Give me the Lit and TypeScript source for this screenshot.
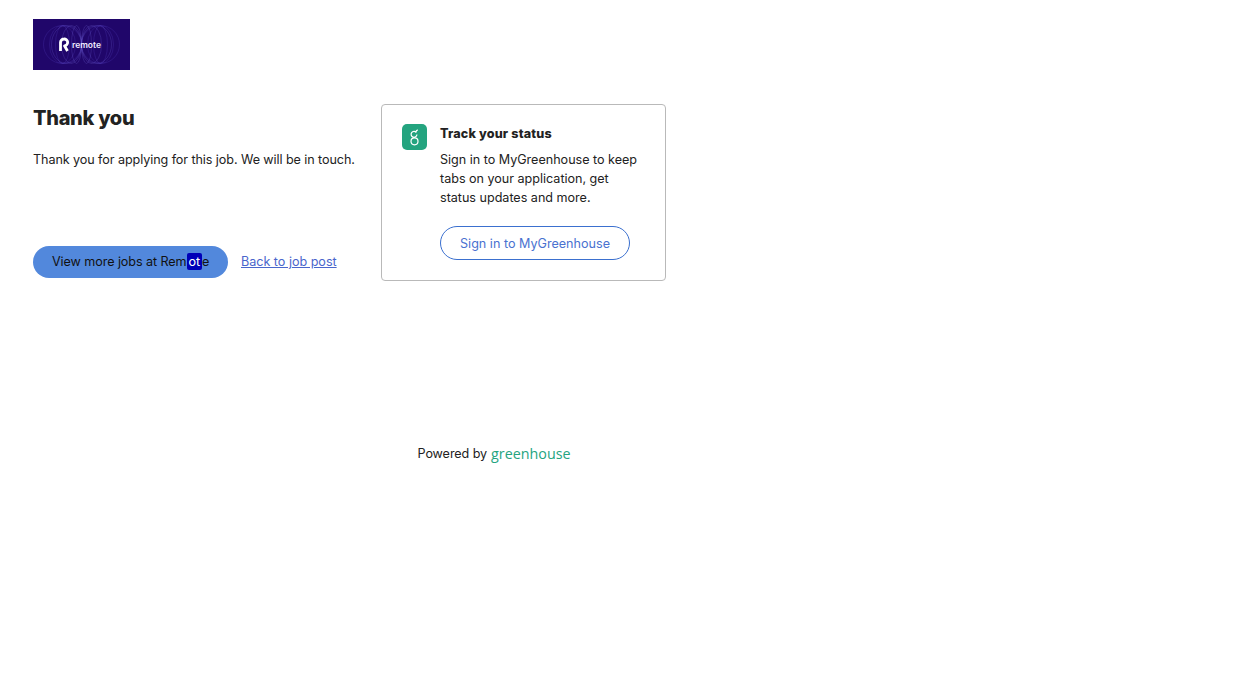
import { LitElement, html, css, svg } from "lit";
import { customElement } from "lit/decorators.js";

const meridians = [19, 13, 7];
const tangents = [15, 10, 5];

@customElement("app-root")
export class AppRoot extends LitElement {
  static styles = css`
    :host {
      display: block;
      min-height: 683px;
      background: #fff;
      font-family: "Inter", "Liberation Sans", sans-serif;
      color: #222;
      font-size: 12.6px;
      letter-spacing: -0.08px;
    }
    .page {
      width: 955px;
      box-sizing: border-box;
      padding: 19px 0 0 33px;
    }
    .logo {
      display: block;
      width: 97px;
      height: 51px;
    }
    .row {
      display: flex;
      margin-top: 34px;
      align-items: flex-start;
    }
    .left {
      width: 348px;
      flex: none;
    }
    h1 {
      margin: 2px 0 0;
      font-size: 20px;
      line-height: 24px;
      font-weight: 800;
      letter-spacing: -0.3px;
      color: #222;
    }
    .msg {
      margin: 19px 0 0;
      line-height: 22px;
      white-space: nowrap;
    }
    .actions {
      display: flex;
      align-items: center;
      gap: 13px;
      margin-top: 75px;
    }
    .btn {
      width: 195px;
      height: 32px;
      box-sizing: border-box;
      padding: 0 0 2px 19px;
      border-radius: 16px;
      background: #5288dc;
      display: flex;
      align-items: center;
      white-space: nowrap;
      color: #111;
    }
    .sel {
      display: inline-block;
      line-height: 17px;
      padding: 0 2px;
      background: #0000b8;
      color: #fff;
      border-radius: 2px;
    }
    .back {
      color: #4a66cc;
      text-decoration: underline;
      letter-spacing: -0.02px;
      padding-bottom: 2px;
    }
    .card {
      width: 285px;
      height: 177px;
      box-sizing: border-box;
      border: 1px solid #b9b9b9;
      border-radius: 4px;
      padding: 20px 20px 0;
      display: flex;
      gap: 13px;
    }
    .mark {
      display: block;
      width: 25px;
      height: 26px;
      margin-top: -1px;
      flex: none;
    }
    .track {
      font-weight: 800;
      line-height: 18px;
      letter-spacing: 0.17px;
      color: #222;
    }
    .body {
      margin: 7px 0 0;
      line-height: 19px;
      letter-spacing: -0.02px;
    }
    .signin {
      width: 190px;
      height: 34px;
      box-sizing: border-box;
      margin-top: 19px;
      border: 1px solid #3b70cf;
      border-radius: 17px;
      display: flex;
      align-items: center;
      justify-content: center;
      color: #4a72d0;
      letter-spacing: 0;
    }
    .footer {
      display: flex;
      justify-content: center;
      align-items: center;
      gap: 4px;
      margin-top: 163px;
      line-height: 20px;
    }
    .gh {
      color: #24a47f;
      font-family: "Open Sans", sans-serif;
      font-size: 14.3px;
      letter-spacing: 0;
      line-height: 20px;
    }
  `;

  render() {
    return html`
      <div class="page">
        <svg class="logo" viewBox="0 0 97 51" aria-label="Remote logo">
          <rect width="97" height="51" fill="#20066a"></rect>
          ${meridians.map(
            (rx) => svg`
              <ellipse cx="29.500" cy="25.500" rx="${rx}" ry="19" fill="none" stroke="#5a46c8" stroke-opacity=".4" stroke-width=".6"></ellipse>
              <ellipse cx="67.500" cy="25.500" rx="${rx}" ry="19" fill="none" stroke="#5a46c8" stroke-opacity=".4" stroke-width=".6"></ellipse>`
          )}
          ${tangents.map(
            (r) => svg`
              <ellipse cx="${48.5 - r}" cy="25.500" rx="${r}" ry="19" fill="none" stroke="#7a6ce0" stroke-opacity=".45" stroke-width=".5"></ellipse>
              <ellipse cx="${48.5 + r}" cy="25.500" rx="${r}" ry="19" fill="none" stroke="#7a6ce0" stroke-opacity=".45" stroke-width=".5"></ellipse>`
          )}
          <path d="M27.500 32v-8.500a3.500 3.500 0 0 1 3.500-3.500a3.400 3.400 0 0 1 .5 6.800L34.500 32" fill="none" stroke="#fff" stroke-width="2.800" stroke-linejoin="round"></path>
          <text x="39" y="29" font-family="Inter, sans-serif" font-size="8.500" font-weight="600" letter-spacing="0" fill="#f0ecff">remote</text>
        </svg>
        <div class="row">
          <div class="left">
            <h1>Thank you</h1>
            <p class="msg">Thank you for applying for this job. We will be in touch.</p>
            <div class="actions">
              <div class="btn"><span>View more jobs at Rem<span class="sel">ot</span>e</span></div>
              <a class="back">Back to job post</a>
            </div>
          </div>
          <div class="card">
            <svg class="mark" viewBox="0 0 25 26" aria-label="Greenhouse mark">
              <rect width="25" height="26" rx="5" fill="#24a47f"></rect>
              <circle cx="12.500" cy="17.300" r="3.500" fill="none" stroke="#fff" stroke-width="1.200"></circle>
              <path d="M14.300 8.600a2.900 2.900 0 1 0 .6 1.800M13.900 8.300c.1-1.300.8-2.100 1.900-2.400" fill="none" stroke="#fff" stroke-width="1.200"></path>
            </svg>
            <div>
              <div class="track">Track your status</div>
              <p class="body">Sign in to MyGreenhouse to keep<br />tabs on your application, get<br />status updates and more.</p>
              <div class="signin">Sign in to MyGreenhouse</div>
            </div>
          </div>
        </div>
        <div class="footer"><span>Powered by</span><span class="gh">greenhouse</span></div>
      </div>
    `;
  }
}
